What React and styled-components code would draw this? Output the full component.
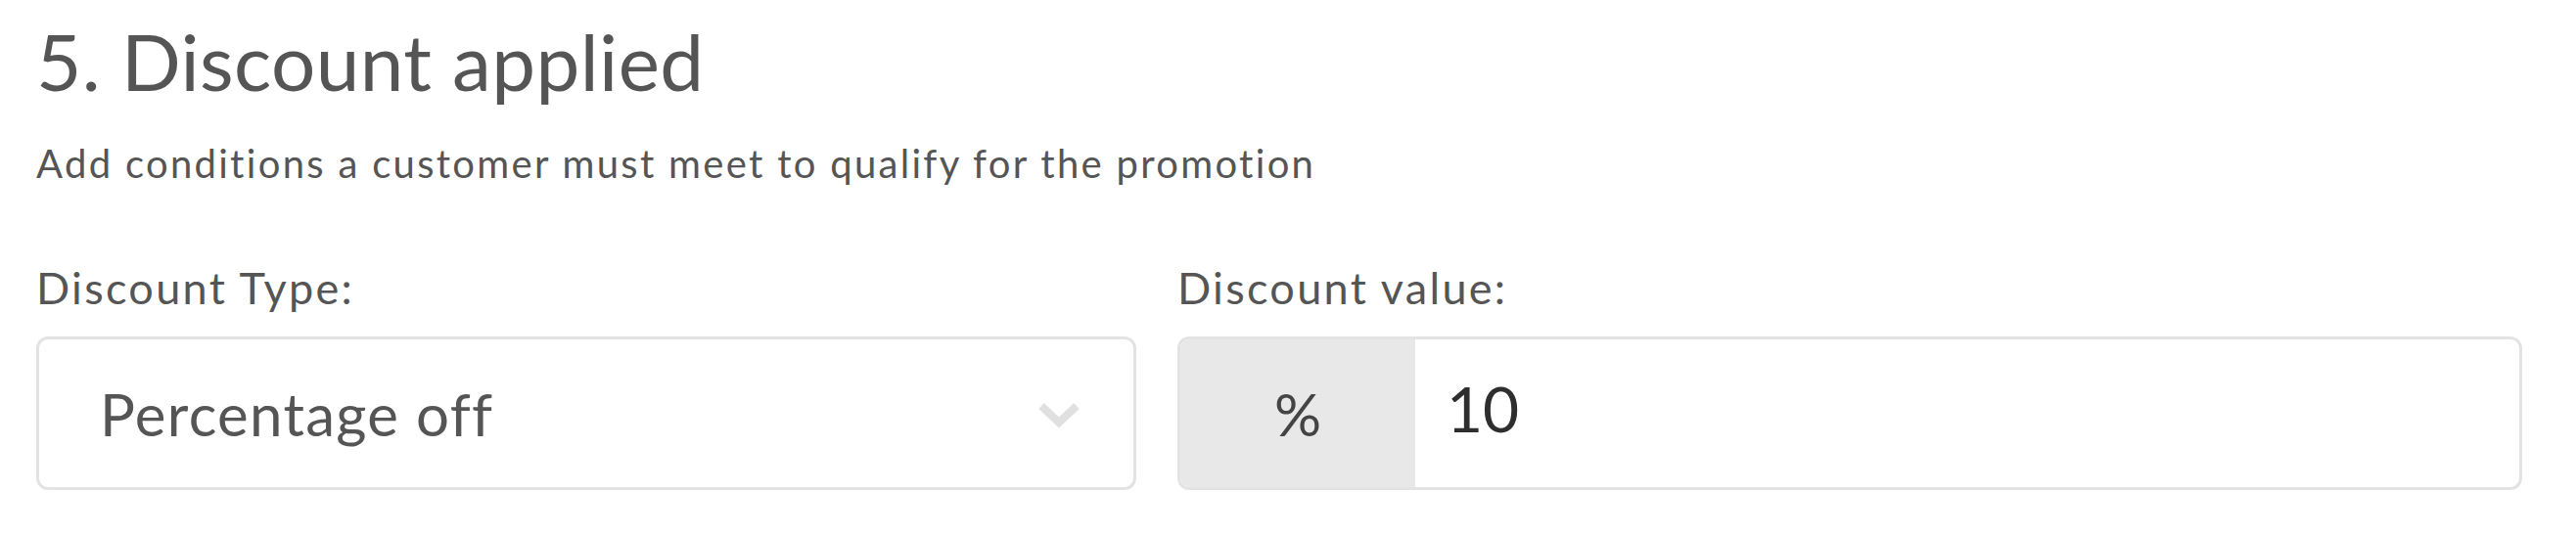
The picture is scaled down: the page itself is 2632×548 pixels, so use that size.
import React from "react";
import styled, { createGlobalStyle } from "styled-components";

const Global = createGlobalStyle`
  html, body { margin: 0; padding: 0; background: #ffffff; }
  body { font-family: Lato, "Open Sans", "Liberation Sans", sans-serif; }
  * { box-sizing: border-box; }
`;

const Section = styled.section`
  padding: 14px 55px 0 37px;
  color: #555555;
`;

const Title = styled.h2`
  margin: 0;
  font-size: 80px;
  font-weight: 400;
  line-height: 1.2;
  letter-spacing: 0.4px;
  color: #555555;
`;

const Description = styled.p`
  margin: 33px 0 0 0;
  font-size: 40px;
  line-height: 1.2;
  letter-spacing: 2.3px;
  font-variant-ligatures: none;
  color: #555555;
`;

const Fields = styled.div`
  display: grid;
  grid-template-columns: 1124fr 1374fr;
  column-gap: 42px;
  margin-top: 76px;
`;

const Field = styled.div`
  display: flex;
  flex-direction: column;
`;

const Label = styled.label`
  font-size: 45px;
  line-height: 1.2;
  letter-spacing: 2.3px;
  color: #555555;
  margin-bottom: 23px;
`;

const Box = styled.div`
  display: flex;
  align-items: stretch;
  height: 157px;
  border: 3px solid #e3e3e3;
  border-radius: 12px;
  background: #ffffff;
  overflow: hidden;
`;

const SelectBox = styled(Box)`
  align-items: center;
  justify-content: space-between;
  padding: 0 54px 0 62px;
`;

const SelectText = styled.span`
  font-size: 60px;
  line-height: 1.2;
  letter-spacing: 1.3px;
  color: #555555;
`;

const ChevronWrap = styled.span`
  display: flex;
  margin-top: 4px;
`;

const Addon = styled.div`
  display: flex;
  align-items: center;
  justify-content: center;
  width: 240px;
  flex: none;
  background: #e8e8e8;
  font-size: 60px;
  line-height: 1.2;
  color: #444444;
`;

const ValueText = styled.div`
  display: flex;
  align-items: center;
  padding: 0 0 8px 32px;
  font-size: 64px;
  line-height: 1.2;
  color: #2e2e2e;
`;

const Chevron = () => (
  <ChevronWrap>
    <svg width="44" height="28" viewBox="0 0 44 28" aria-hidden="true">
      <polyline
        points="4,4 22,21 40,4"
        fill="none"
        stroke="#e0e0e0"
        strokeWidth="8"
      />
    </svg>
  </ChevronWrap>
);

export default function App() {
  return (
    <>
      <Global />
      <Section>
        <Title>5. Discount applied</Title>
        <Description>
          Add conditions a customer must meet to qualify for the promotion
        </Description>
        <Fields>
          <Field>
            <Label>Discount Type:</Label>
            <SelectBox>
              <SelectText>Percentage off</SelectText>
              <Chevron />
            </SelectBox>
          </Field>
          <Field>
            <Label>Discount value:</Label>
            <Box>
              <Addon>%</Addon>
              <ValueText>10</ValueText>
            </Box>
          </Field>
        </Fields>
      </Section>
    </>
  );
}
